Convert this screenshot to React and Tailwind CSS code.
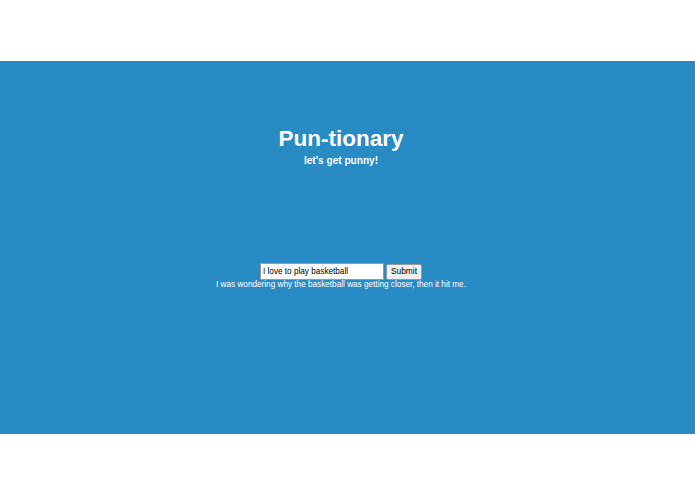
export default function App() {
  return (
    <div className="min-h-[494px] w-full bg-white" style={{ fontFamily: '"Liberation Sans", Arial, sans-serif' }}>
      <div className="h-[61px]" />
      <section className="flex h-[373px] flex-col items-center bg-[#288bc4] pr-[13px] pt-[65px] text-white">
        <h1 className="text-[22.5px] font-bold leading-[26px]">Pun-tionary</h1>
        <p className="mt-[3px] text-[10.1px] font-bold leading-[12px]">let's get punny!</p>
        <form
          className="mt-[96px] flex items-center gap-[2px]"
          onSubmit={(e) => e.preventDefault()}
        >
          <input
            type="text"
            defaultValue="I love to play basketball"
            className="h-[17px] w-[124px] border border-[#9a9a9a] bg-white px-[2px] text-[8.2px] text-black outline-none"
          />
          <button
            type="submit"
            className="flex h-[16px] items-center rounded-[2px] border border-[#9a9a9a] bg-[#efefef] px-[4px] text-[8.4px] leading-none text-black"
          >
            Submit
          </button>
        </form>
        <p className="text-[8.2px] leading-[10px]">
          I was wondering why the basketball was getting closer, then it hit me.
        </p>
      </section>
    </div>
  );
}
